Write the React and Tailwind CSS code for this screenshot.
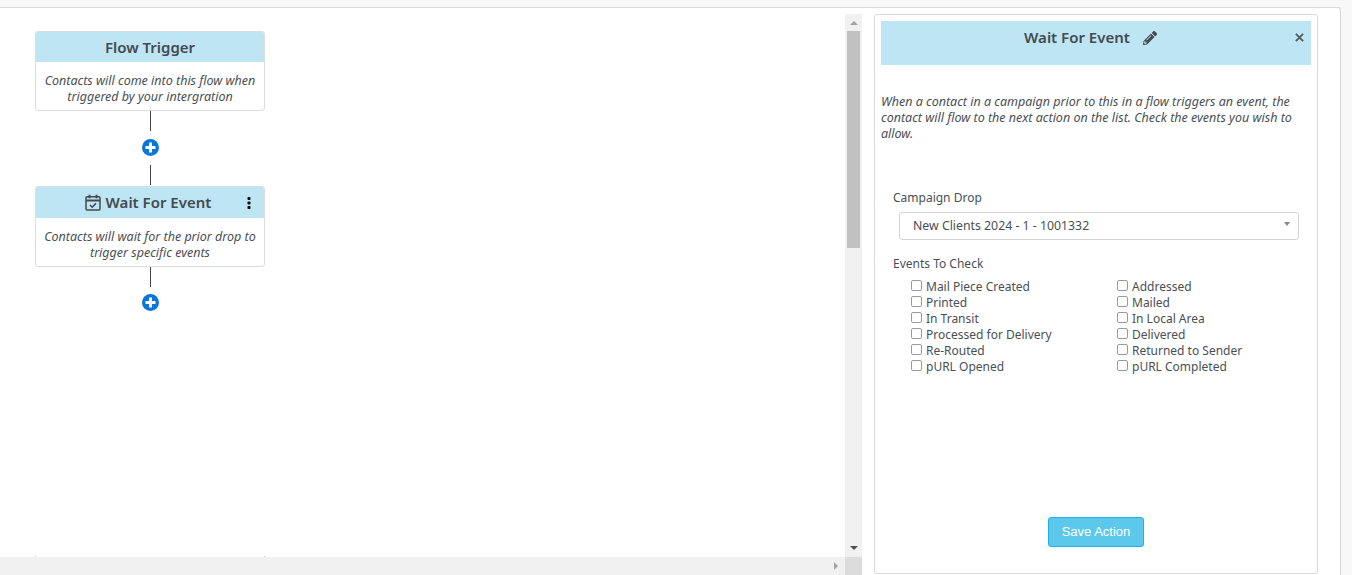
import React from "react";

const font = "font-['Noto_Sans','Open_Sans',sans-serif]";

function Plus() {
  return (
    <svg width="17" height="17" viewBox="0 0 17 17" className="block">
      <circle cx="8.5" cy="8.5" r="8.5" fill="#0b76d8" />
      <path d="M8.5 3.5v10M3.5 8.5h10" stroke="#fff" strokeWidth="3" />
    </svg>
  );
}

function Connector({ tail }) {
  return (
    <div className="flex flex-col items-center w-[230px]">
      <div className="w-px h-[20px] bg-[#444]" />
      <div className={tail ? "mt-[8px]" : "mt-[7px]"}><Plus /></div>
      {tail && <div className="w-px h-[20px] mt-[9px] mb-[1px] bg-[#444]" />}
    </div>
  );
}

function Card({ title, icon, menu, children, headH }) {
  return (
    <div className="w-[230px] border border-[#ddd] rounded-[3px] bg-white overflow-hidden">
      <div className={`${headH} ${menu ? "pr-[4px]" : ""} bg-[#bee5f3] flex items-center justify-center relative text-[15px] font-semibold text-[#444a50]`}>
        {icon}
        <span>{title}</span>
        {menu && (
          <svg width="4" height="12" viewBox="0 0 4 12" className="absolute right-[13px] top-[10px]">
            <rect x="0.5" y="0" width="3" height="3" rx="0.8" fill="#111" />
            <rect x="0.5" y="4.5" width="3" height="3" rx="0.8" fill="#111" />
            <rect x="0.5" y="9" width="3" height="3" rx="0.8" fill="#111" />
          </svg>
        )}
      </div>
      <div className="px-[4px] pt-[11px] pb-[5px] text-center italic text-[12.5px] leading-[16px] text-[#4a4f55]">{children}</div>
    </div>
  );
}

function CalendarCheck() {
  return (
    <svg width="16" height="17" viewBox="0 0 16 17" fill="none" stroke="#444a50" strokeWidth="1.5" className="mr-[5px]">
      <rect x="1" y="2.8" width="14" height="13.2" rx="1.2" />
      <path d="M1 6.5h14" strokeWidth="1.8" />
      <path d="M4.5 0.8v3.4M11.5 0.8v3.4" strokeWidth="2" />
      <path d="M5 11l2.2 2.2L11 9.4" />
    </svg>
  );
}

function Check({ label }) {
  return (
    <label className="flex items-start h-[16px] leading-[16px]">
      <span className="w-[11px] h-[11px] mt-[1px] border border-[#9a9a9a] rounded-[2px] bg-white mr-[4px] shrink-0" />
      <span>{label}</span>
    </label>
  );
}

const events = [
  "Mail Piece Created", "Addressed",
  "Printed", "Mailed",
  "In Transit", "In Local Area",
  "Processed for Delivery", "Delivered",
  "Re-Routed", "Returned to Sender",
  "pURL Opened", "pURL Completed",
];

export default function App() {
  return (
    <div className={`${font} h-[575px] overflow-hidden bg-[#f8f8f8] pt-[7px] pr-[11px] text-[12px] text-[#4a4f55]`}>
      <div className="h-[600px] bg-white border-t border-r border-[#d9d9d9] rounded-tr-[3px] flex">
        <div className="w-[862px] h-[567px] flex flex-col shrink-0">
          <div className="flex h-[549px]">
            <div className="w-[845px] pl-[35px] pt-[23px] relative">
              <Card title="Flow Trigger" headH="h-[30px]">
                Contacts will come into this flow when triggered by your intergration
              </Card>
              <Connector tail />
              <Card title="Wait For Event" icon={<CalendarCheck />} menu headH="h-[31px]">
                Contacts will wait for the prior drop to trigger specific events
              </Card>
              <Connector />
              <div className="absolute left-[35px] bottom-0 w-px h-px bg-[#ccc]" />
              <div className="absolute left-[264px] bottom-0 w-px h-px bg-[#ccc]" />
            </div>
            <div className="w-[17px] mt-[6px] bg-[#f1f1f1] flex flex-col items-center pt-[7px]">
              <div className="w-0 h-0 border-x-[4px] border-x-transparent border-b-[4px] border-b-[#a3a3a3]" />
              <div className="w-[13px] h-[217px] mt-[6px] bg-[#c1c1c1]" />
              <div className="flex-1" />
              <div className="w-0 h-0 mb-[7px] border-x-[4px] border-x-transparent border-t-[4px] border-t-[#505050]" />
            </div>
          </div>
          <div className="h-[18px] flex bg-[#f1f1f1]">
            <div className="flex-1 flex items-center justify-end pr-[7px]">
              <div className="w-0 h-0 border-y-[4px] border-y-transparent border-l-[4px] border-l-[#a3a3a3]" />
            </div>
            <div className="w-[17px] bg-[#dcdcdc]" />
          </div>
        </div>
        <div className="ml-[12px] mt-[6px] w-[444px] h-[560px] border border-[#d9d9d9] rounded-[3px] p-[6px] bg-white relative flex flex-col">
          <div className="h-[44px] bg-[#bee5f3] relative flex justify-center pt-[6px] pr-[11px] text-[15px] font-semibold text-[#444a50] leading-[20px]">
            <span>Wait For Event</span>
            <svg width="14" height="14" viewBox="0 0 512 512" className="ml-[13px] mt-[4px]" fill="#444a50">
              <path d="M497.9 142.1l-46.1 46.1c-4.7 4.7-12.3 4.7-17 0l-111-111c-4.7-4.7-4.7-12.3 0-17l46.1-46.1c18.7-18.7 49.1-18.7 67.9 0l60.1 60.1c18.8 18.7 18.8 49.1 0 67.9zM284.2 99.8L21.6 362.4.4 483.9c-2.9 16.4 11.4 30.6 27.8 27.8l121.5-21.3 262.6-262.6c4.7-4.7 4.7-12.3 0-17l-111-111c-4.8-4.7-12.4-4.7-17.1 0zM124.1 339.9c-5.5-5.5-5.5-14.3 0-19.8l154-154c5.5-5.5 14.3-5.5 19.8 0s5.5 14.3 0 19.8l-154 154c-5.5 5.5-14.3 5.5-19.8 0zM88 424h48v36.3l-64.5 11.3-31.1-31.1L51.7 376H88v48z" />
            </svg>
            <svg width="9" height="9" viewBox="0 0 10 10" className="absolute right-[7px] top-[12px]" stroke="#555b61" strokeWidth="2.2">
              <path d="M1 1l8 8M9 1l-8 8" />
            </svg>
          </div>
          <p className="mt-[29px] italic leading-[16px] text-[12.5px]">
            When a contact in a campaign prior to this in a flow triggers an event, the contact will flow to the next action on the list. Check the events you wish to allow.
          </p>
          <div className="mt-[48px] px-[12px] leading-[16px]">Campaign Drop</div>
          <div className="mt-[6px] ml-[18px] w-[400px] h-[28px] border border-[#d5d5d5] rounded-[3px] pl-[13px] flex items-center relative text-[12.3px]">
            New Clients 2024 - 1 - 1001332
            <div className="absolute right-[8px] top-[9px] w-0 h-0 border-x-[3px] border-x-transparent border-t-[4px] border-t-[#888]" />
          </div>
          <div className="mt-[16px] px-[12px] leading-[16px]">Events To Check</div>
          <div className="mt-[7px] ml-[30px] grid grid-cols-[206px_1fr]">
            {events.map((e) => <Check key={e} label={e} />)}
          </div>
          <div className="flex-1" />
          <div className="flex justify-center mb-[20px]">
            <button className="w-[96px] h-[30px] rounded-[3px] border border-[#1fb0e6] bg-[#5bc8ec] text-white text-[13px] font-['Liberation_Sans',sans-serif]">Save Action</button>
          </div>
        </div>
      </div>
    </div>
  );
}
